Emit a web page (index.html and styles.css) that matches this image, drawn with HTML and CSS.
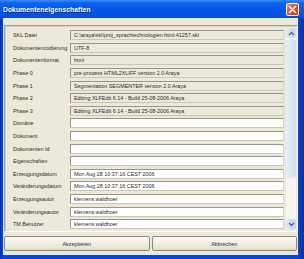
FILE: index.html
```html
<!DOCTYPE html>
<html lang="de">
<head>
  <meta charset="UTF-8">
  <title>Dokumenteneigenschaften</title>
  <link rel="stylesheet" href="styles.css">
</head>
<body>
  <div class="window">
    <div class="titlebar">
      <span class="title">Dokumenteneigenschaften</span>
      <span class="close-btn">
        <svg width="9" height="9" viewBox="0 0 9 9"><path d="M1.5 1.5 L7.5 7.5 M7.5 1.5 L1.5 7.5" stroke="#fff" stroke-width="1.6" stroke-linecap="round"/></svg>
      </span>
    </div>

    <div class="client">
      <div class="panel">
        <div class="rows">
          <div class="label">SKL Datei</div>
          <div class="field readonly">C:\araya\skl\proj_sprachtechnologien.html.41257.skl</div>
          <div class="label">Dokumentencodierung</div>
          <div class="field readonly">UTF-8</div>
          <div class="label">Dokumentenformat</div>
          <div class="field readonly">html</div>
          <div class="label">Phase 0</div>
          <div class="field readonly">pre-process HTML2XLIFF version 2.0 Araya</div>
          <div class="label">Phase 1</div>
          <div class="field readonly">Segmentation SEGMENTER version 2.0 Araya</div>
          <div class="label">Phase 2</div>
          <div class="field readonly">Editing XLFEdit 6.14 - Build 25-08-2006 Araya</div>
          <div class="label">Phase 3</div>
          <div class="field readonly">Editing XLFEdit 6.14 - Build 25-08-2006 Araya</div>
          <div class="label">Domäne</div>
          <div class="field"></div>
          <div class="label">Dokument</div>
          <div class="field"></div>
          <div class="label">Dokumenten Id</div>
          <div class="field"></div>
          <div class="label">Eigenschaften</div>
          <div class="field"></div>
          <div class="label">Erzeugungsdatum</div>
          <div class="field">Mon Aug 28 10:37:16 CEST 2006</div>
          <div class="label">Veränderungsdatum</div>
          <div class="field">Mon Aug 28 10:37:16 CEST 2006</div>
          <div class="label">Erzeugungsautor</div>
          <div class="field">klemens.waldhoer</div>
          <div class="label">Veränderungsautor</div>
          <div class="field">klemens.waldhoer</div>
          <div class="label">TM Benutzer</div>
          <div class="field">klemens.waldhoer</div>
        </div>

        <div class="scrollbar">
          <div class="scroll-btn">
            <svg width="7" height="5" viewBox="0 0 7 5"><path d="M1 4 L3.5 1.5 L6 4" fill="none" stroke="#4d6185" stroke-width="1.3"/></svg>
          </div>
          <div class="scroll-track">
            <div class="scroll-thumb"></div>
          </div>
          <div class="scroll-btn">
            <svg width="7" height="5" viewBox="0 0 7 5"><path d="M1 1 L3.5 3.5 L6 1" fill="none" stroke="#4d6185" stroke-width="1.3"/></svg>
          </div>
        </div>
      </div>

      <div class="buttons">
        <button class="btn">Akzeptieren</button>
        <button class="btn">Abbrechen</button>
      </div>
    </div>
  </div>
</body>
</html>
```

FILE: styles.css
```css
:root {
  --face: #ece9d8;
  --edge: #a19e8f;
  --text: #2a2a2a;
}

body {
  margin: 0;
  font-family: 'Liberation Sans', Arial, sans-serif;
  background: #fff;
}

.window {
  width: 304px;
  height: 259px;
  display: flex;
  flex-direction: column;
  background: linear-gradient(to right, #0026a8 0, #0848d8 2px, #0848d8 298px, #0a3cc4 300px, #06319e 304px);
}

.titlebar {
  height: 18px;
  flex: none;
  display: flex;
  align-items: center;
  justify-content: space-between;
  padding: 0 5px 0 3px;
  background: linear-gradient(#3a8cf8 0, #0d62ee 3px, #0458e4 9px, #0552dc 15px, #0a4acc 18px);
}

.title {
  color: #fff;
  font-weight: 700;
  font-size: 6.7px;
  letter-spacing: 0.1px;
  text-shadow: 1px 1px 0 #0a2a80;
}

.close-btn {
  width: 11px;
  height: 11px;
  border: 1px solid #fff;
  border-radius: 2px;
  background: linear-gradient(135deg, #f09070 0, #e0502a 45%, #c8401c 100%);
  display: flex;
  align-items: center;
  justify-content: center;
}

.client {
  flex: 1;
  margin: 0 6px 4px 3px;
  background: var(--face);
  display: flex;
  flex-direction: column;
  padding: 7px 0 4px 1px;
}

.panel {
  height: 205px;
  border: 1px solid var(--edge);
  border-right-color: #fff;
  border-bottom-color: #fff;
  box-shadow: inset 1px 1px 0 #d4d0c0;
  display: flex;
}

.rows {
  flex: 1;
  display: grid;
  grid-template-columns: 57px 1fr;
  grid-auto-rows: 12.6px;
  align-items: center;
  padding: 3px 2px 0 8px;
}

.label {
  font-size: 5.4px;
  color: var(--text);
  white-space: nowrap;
}

.field {
  height: 8px;
  border: 1px solid #9a978a;
  border-bottom-color: #c9c6b6;
  border-right-color: #d8d5c6;
  background: #fff;
  font-size: 5.4px;
  line-height: 8px;
  padding-left: 3px;
  color: var(--text);
  white-space: nowrap;
  overflow: hidden;
}

.field.readonly {
  background: var(--face);
}

.scrollbar {
  width: 10px;
  margin: 2px 1px 2px 0;
  display: flex;
  flex-direction: column;
  background: #f6f5f0;
}

.scroll-btn {
  height: 10px;
  flex: none;
  border-radius: 2px;
  background: linear-gradient(to right, #dce6fb, #c4d4f8);
  display: flex;
  align-items: center;
  justify-content: center;
}

.scroll-track {
  flex: 1;
  padding: 1px 0;
  display: flex;
}

.scroll-thumb {
  flex: 1;
  margin-bottom: 40px;
  border-radius: 2px;
  background: linear-gradient(to right, #e6eefc, #d2def9);
}

.buttons {
  margin-top: 4px;
  display: flex;
  gap: 2px;
  padding-right: 1px;
}

.btn {
  flex: 1;
  height: 15px;
  padding: 0;
  border: 1px solid #8c8a7c;
  border-radius: 2px;
  background: linear-gradient(#fbfaf6, #ece9de 70%, #dedbcc);
  font-family: 'Liberation Sans', Arial, sans-serif;
  font-size: 5.4px;
  color: var(--text);
}
```
